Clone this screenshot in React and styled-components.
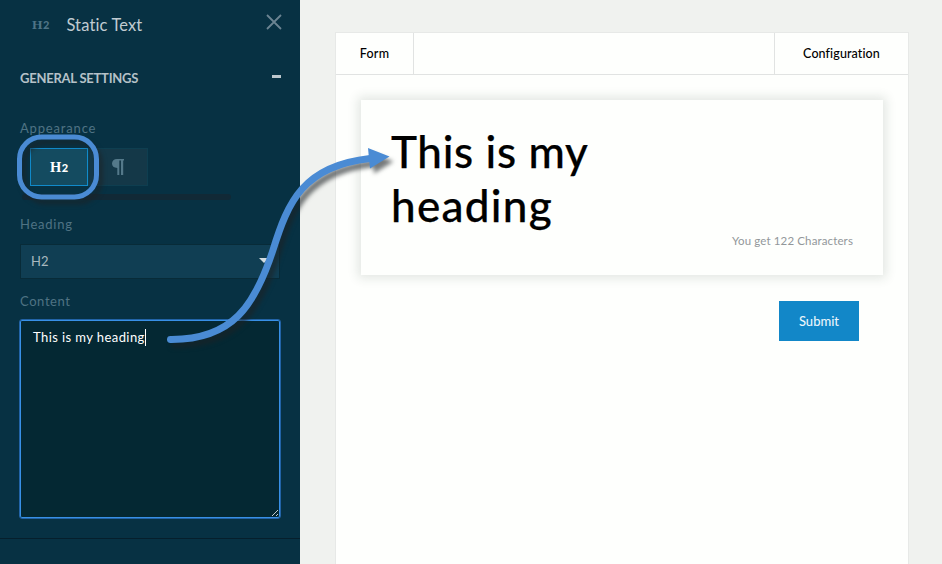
import React from "react";
import styled, { createGlobalStyle } from "styled-components";

const GlobalStyle = createGlobalStyle`
  *, *::before, *::after { box-sizing: border-box; }
  body {
    margin: 0;
    background: #f0f2ef;
    font-family: Lato, "Open Sans", sans-serif;
    font-variant-ligatures: none;
    overflow: hidden;
  }
`;

const Page = styled.div`
  position: relative;
  display: flex;
  width: 942px;
  height: 564px;
  overflow: hidden;
`;

const Sidebar = styled.aside`
  display: flex;
  flex-direction: column;
  width: 300px;
  flex: none;
  background: #073143;
`;

const SidebarBody = styled.div`
  display: flex;
  flex-direction: column;
  height: 539px;
  padding: 0 19px 0 20px;
  border-bottom: 1px solid #061f2c;
`;

const PanelHeader = styled.header`
  display: flex;
  align-items: center;
  height: 49px;
  padding-left: 12px;
`;

const H2Glyph = styled.span`
  display: inline-flex;
  align-items: baseline;
  font-family: "Liberation Serif", serif;
  font-weight: 700;
  font-size: ${(p) => p.$size}px;
  line-height: 16px;
  color: ${(p) => p.$color};
  small {
    font-family: Lato, sans-serif;
    font-weight: 900;
    font-size: 11px;
    margin-left: 0.5px;
  }
`;

const PanelTitle = styled.h1`
  flex: 1;
  margin: 0 0 0 17px;
  font-size: 16.5px;
  font-weight: 400;
  line-height: 20px;
  letter-spacing: 0.13px;
  color: #c0cbd1;
`;

const CloseIcon = styled.svg`
  width: 16px;
  height: 16px;
  margin: -6px -1px 0 0;
`;

const SectionHeader = styled.div`
  display: flex;
  align-items: center;
  justify-content: space-between;
  height: 57px;
  margin-bottom: 1px;
  color: #b5c1c8;
  font-size: 13px;
  font-weight: 700;
  letter-spacing: -0.24px;
`;

const Minus = styled.i`
  width: 9px;
  height: 3px;
  margin: -3px 0 0 0;
  background: #bcc7cd;
`;

const FieldLabel = styled.label`
  display: block;
  font-size: 13px;
  line-height: 16px;
  letter-spacing: ${(p) => p.$spacing}px;
  color: #4f7384;
  margin-top: ${(p) => p.$top}px;
`;

const ToggleGroup = styled.div`
  display: flex;
  margin: 12px 0 0 10px;
`;

const Toggle = styled.button`
  display: flex;
  align-items: center;
  justify-content: center;
  width: ${(p) => (p.$active ? 58 : 60)}px;
  height: 38px;
  padding: 0;
  border: 1px solid ${(p) => (p.$active ? "#118bcb" : "#0e3e50")};
  background: ${(p) => (p.$active ? "#144b60" : "#143848")};
`;

const PilcrowIcon = styled.svg`
  width: 12px;
  height: 17px;
`;

const ShadowLine = styled.div`
  width: 209px;
  height: 6px;
  margin: 8px 0 0 2px;
  border-radius: 3px;
  background: #112936;
`;

const Select = styled.div`
  display: flex;
  align-items: center;
  justify-content: space-between;
  height: 35px;
  margin: 12px 1px 0 0;
  padding: 0 10px 2px;
  border: 1px solid #082b38;
  background: #103e53;
  color: #a9b8bf;
  font-size: 13px;
  letter-spacing: 0.1px;
`;

const Caret = styled.i`
  border: 5px solid transparent;
  border-top-color: #d3dce0;
  border-bottom: 0;
`;

const TextArea = styled.div`
  position: relative;
  width: 262px;
  height: 200px;
  margin: 10px 0 0 -1px;
  padding: 8px 13px;
  border: 1px solid #2263a6;
  border-radius: 3px;
  background: #042833;
  box-shadow: inset 0 0 0 1px #3890e6;
  color: #fff;
  font-size: 13px;
  line-height: 19px;
`;

const Typed = styled.span`
  display: inline-block;
  height: 17px;
  line-height: 17px;
  border-right: 1px solid #fff;
  letter-spacing: 0.42px;
  white-space: nowrap;
`;

const ResizeGrip = styled.svg`
  position: absolute;
  right: 1px;
  bottom: 1px;
  width: 8px;
  height: 8px;
`;

const FormPanel = styled.main`
  width: 574px;
  height: 540px;
  margin: 32px 0 0 35px;
  border: 1px solid #e7e9e7;
  background: #fefffd;
`;

const TabBar = styled.nav`
  display: flex;
  justify-content: space-between;
  height: 42px;
  border-bottom: 1px solid #e1e3e2;
`;

const Tab = styled.div`
  display: flex;
  align-items: center;
  justify-content: center;
  width: ${(p) => p.$width}px;
  padding-bottom: ${(p) => p.$lift}px;
  border-left: ${(p) => (p.$side === "right" ? "1px solid #e1e3e2" : "0")};
  border-right: ${(p) => (p.$side === "left" ? "1px solid #e1e3e2" : "0")};
  font-size: 12.5px;
  font-weight: 500;
  letter-spacing: ${(p) => p.$spacing}px;
  color: #000;
`;

const Card = styled.section`
  display: flex;
  flex-direction: column;
  width: 522px;
  height: 175px;
  margin: 25px 0 0 25px;
  padding: 24px 30px 0;
  background: #fefffd;
  box-shadow: 0 0 10px 3px rgba(40, 60, 50, 0.13);
`;

const Heading = styled.h2`
  width: 240px;
  margin: 0 0 1px;
  font-size: 44px;
  font-weight: 500;
  line-height: 54px;
  color: #000;
  -webkit-text-stroke: 0.25px #000;
`;

const HeadingLine = styled.span`
  display: block;
  white-space: nowrap;
  letter-spacing: ${(p) => p.$spacing}px;
`;

const Hint = styled.p`
  align-self: flex-end;
  margin: 0;
  font-size: 11.5px;
  line-height: 16px;
  letter-spacing: 0.13px;
  color: #92979a;
`;

const Submit = styled.button`
  display: block;
  width: 80px;
  height: 40px;
  margin: 26px 0 0 443px;
  padding: 0;
  border: 0;
  background: #1287c8;
  color: #e9f4fb;
  font-family: inherit;
  font-size: 13px;
  font-weight: 500;
`;

const Annotation = styled.svg`
  position: absolute;
  inset: 0;
  pointer-events: none;
`;

function Callouts() {
  return (
    <Annotation width="942" height="564" viewBox="0 0 942 564">
      <defs>
        <filter id="drop" x="0" y="0" width="942" height="564" filterUnits="userSpaceOnUse" colorInterpolationFilters="sRGB">
          <feDropShadow dx="4" dy="5" stdDeviation="2" floodColor="#1c2224" floodOpacity="0.6" />
        </filter>
      </defs>
      <g filter="url(#drop)">
        <rect x="19.5" y="137" width="77" height="60" rx="22" fill="none" stroke="#4a8bd4" strokeWidth="5" />
        <path
          d="M170.5 339.5 C233 340 255 305 273 250 C288 202 303 166 370 158.5"
          fill="none"
          stroke="#4a8bd4"
          strokeWidth="7"
          strokeLinecap="round"
        />
        <path d="M368 148 L389.5 156.5 L370 168.5 Z" fill="#4a8bd4" />
      </g>
    </Annotation>
  );
}

export default function App() {
  return (
    <>
      <GlobalStyle />
      <Page>
        <Sidebar>
          <SidebarBody>
            <PanelHeader>
              <H2Glyph $size={13.5} $color="#4f7486">H<small>2</small></H2Glyph>
              <PanelTitle>Static Text</PanelTitle>
              <CloseIcon viewBox="0 0 16 16">
                <path d="M1 1 L15 15 M15 1 L1 15" stroke="#6b8492" strokeWidth="1.8" fill="none" />
              </CloseIcon>
            </PanelHeader>
            <SectionHeader>
              GENERAL SETTINGS
              <Minus />
            </SectionHeader>
            <FieldLabel $top={13} $spacing={0.83}>Appearance</FieldLabel>
            <ToggleGroup>
              <Toggle $active>
                <H2Glyph $size={14.5} $color="#fff">H<small>2</small></H2Glyph>
              </Toggle>
              <Toggle>
                <PilcrowIcon viewBox="0 0 12 17">
                  <path
                    d="M12 0 V1.5 H11.2 V16 H9 V1.5 H7.3 V16 H5.3 V9 C1.8 9 0 7.2 0 4.6 C0 1.8 2 0 5 0 Z"
                    fill="#54798a"
                  />
                </PilcrowIcon>
              </Toggle>
            </ToggleGroup>
            <ShadowLine />
            <FieldLabel $top={16} $spacing={0.75}>Heading</FieldLabel>
            <Select>
              H2
              <Caret />
            </Select>
            <FieldLabel $top={14} $spacing={0.6}>Content</FieldLabel>
            <TextArea>
              <Typed>This is my heading</Typed>
              <ResizeGrip viewBox="0 0 8 8">
                <path d="M1 7 L7 1 M5 7 L7 5" stroke="#c3cdd0" strokeWidth="1" fill="none" />
              </ResizeGrip>
            </TextArea>
          </SidebarBody>
        </Sidebar>
        <FormPanel>
          <TabBar>
            <Tab $width={78} $side="left" $lift={0} $spacing={0.25}>Form</Tab>
            <Tab $width={134} $side="right" $lift={1} $spacing={0.1}>Configuration</Tab>
          </TabBar>
          <Card>
            <Heading>
              <HeadingLine $spacing={0.65}>This is my</HeadingLine>
              <HeadingLine $spacing={1.3}>heading</HeadingLine>
            </Heading>
            <Hint>You get 122 Characters</Hint>
          </Card>
          <Submit>Submit</Submit>
        </FormPanel>
        <Callouts />
      </Page>
    </>
  );
}
